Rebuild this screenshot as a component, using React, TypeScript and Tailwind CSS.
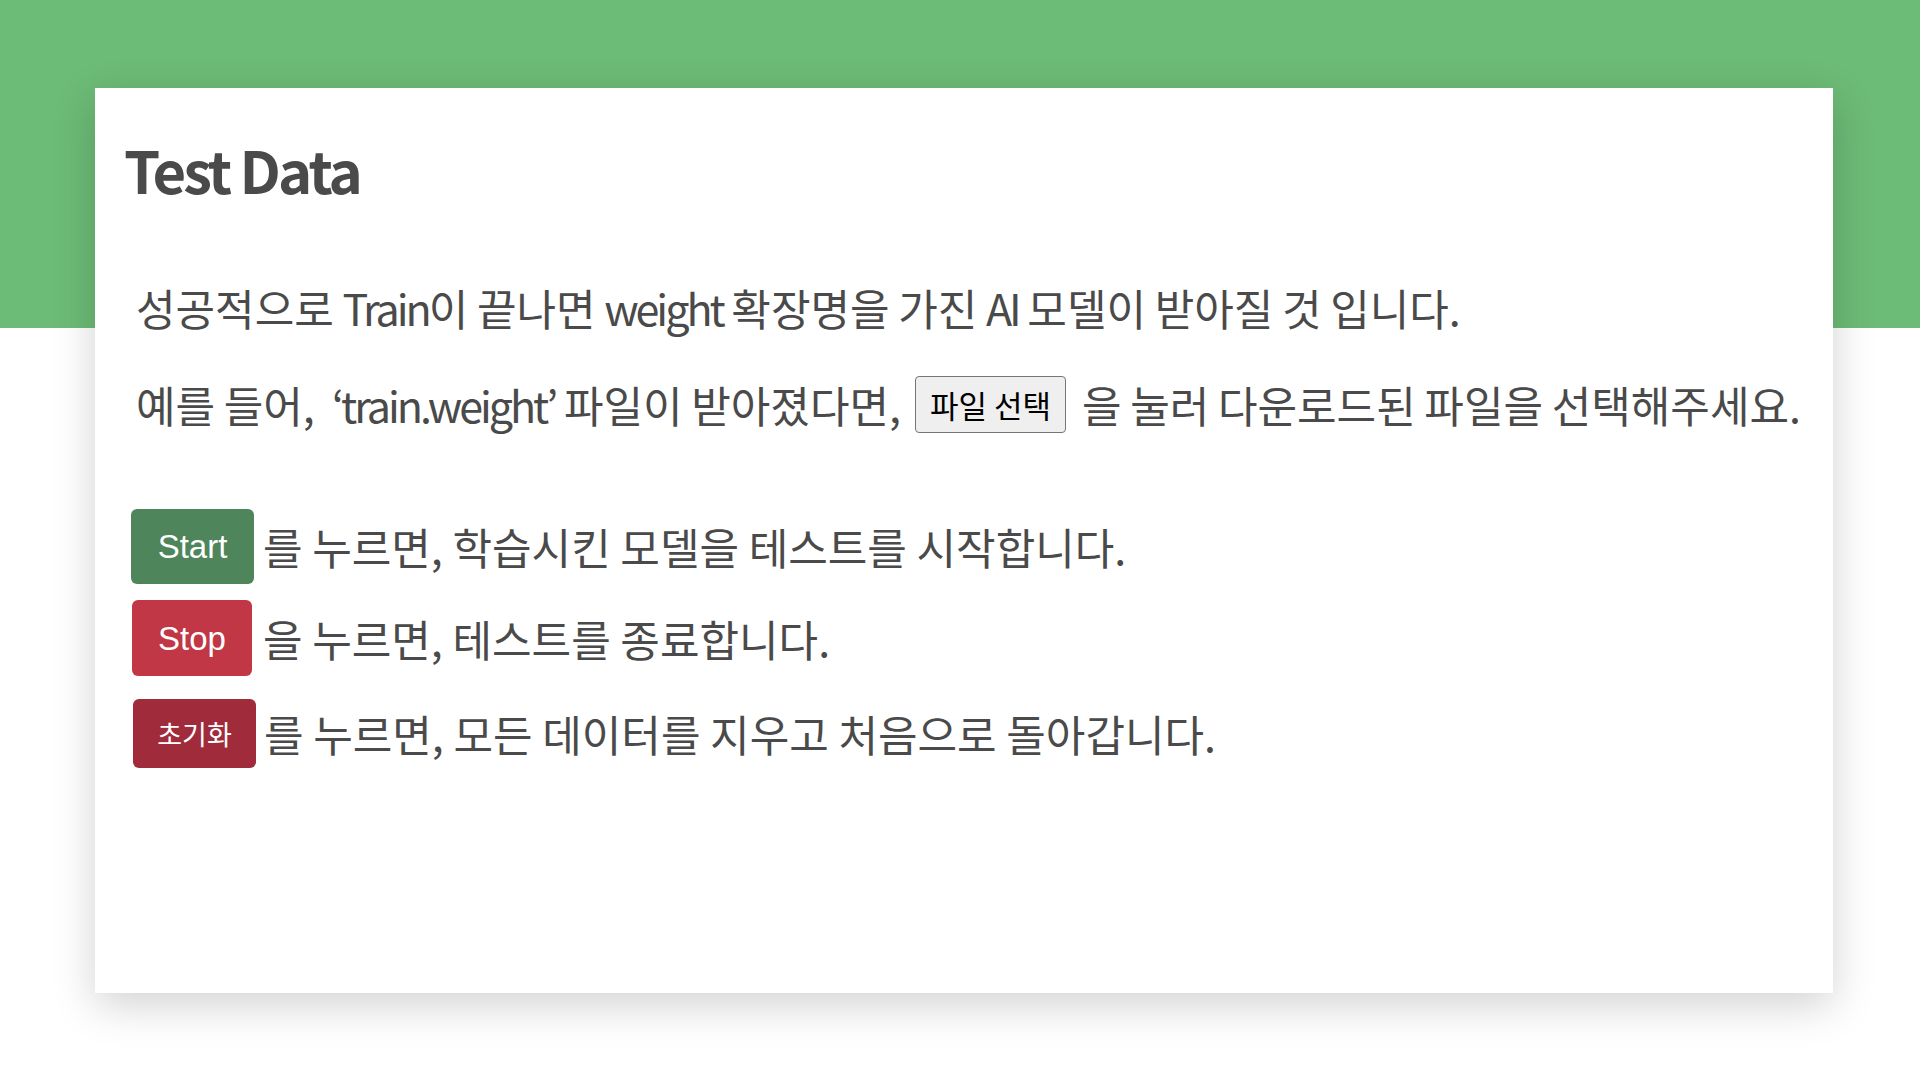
export default function App() {
  const kr = "font-['Noto_Sans_CJK_KR',sans-serif]"
  // Latin words sit a little tighter than the hangul around them
  const latin = 'tracking-[-0.07em]'

  return (
    <div className="min-h-[1080px] w-[1920px] bg-[linear-gradient(to_bottom,#6cbb76_328px,#ffffff_328px)] pt-[88px] pl-[95px]">
      {/* Card */}
      <div className={`${kr} w-[1738px] h-[905px] bg-white shadow-[0_12px_40px_rgba(0,0,0,0.18)] pl-[29px] pt-[39px] text-[#4a4a4a]`}>
        <h1 className="text-[58px] font-bold leading-none tracking-[-0.05em] h-[84px] flex items-center">
          Test Data
        </h1>

        {/* Description */}
        <div className="mt-[68px] pl-[12px] text-[43px] leading-none [word-spacing:-1px]">
          <div className="h-[56px] flex items-center whitespace-pre">
            성공적으로 <span className={latin}>Train</span>이 끝나면 <span className={latin}>weight</span> 확장명을 가진 <span className={latin}>AI</span> 모델이 받아질 것 입니다.
          </div>
          <div className="mt-[40px] h-[58px] flex items-center whitespace-pre">
            <span>
              예를 들어,  <span className={latin}>‘train.weight’</span> 파일이 받아졌다면,
            </span>
            <button className="ml-[14px] mr-[16px] h-[57px] w-[151px] rounded-[4px] border border-[#767676] bg-[#efefef] text-[31px] text-black [word-spacing:0px]">
              파일 선택
            </button>
            <span>을 눌러 다운로드된 파일을 선택해주세요.</span>
          </div>
        </div>

        {/* Actions */}
        <div className="mt-[76px] pl-[7px] flex flex-col text-[43px] leading-none">
          <div className="flex items-center gap-[9px]">
            <button className="h-[75px] w-[123px] rounded-[6px] bg-[#4e855a] text-white text-[33px] font-['Liberation_Sans',sans-serif]">
              Start
            </button>
            <span>를 누르면, 학습시킨 모델을 테스트를 시작합니다.</span>
          </div>
          <div className="mt-[16px] flex items-center gap-[11px]">
            <button className="ml-[1px] h-[76px] w-[120px] rounded-[6px] bg-[#c13745] text-white text-[33px] font-['Liberation_Sans',sans-serif]">
              Stop
            </button>
            <span>을 누르면, 테스트를 종료합니다.</span>
          </div>
          <div className="mt-[23px] flex items-center gap-[8px]">
            <button className="ml-[2px] h-[69px] w-[123px] rounded-[6px] bg-[#a02c3b] text-white text-[27px]">
              초기화
            </button>
            <span>를 누르면, 모든 데이터를 지우고 처음으로 돌아갑니다.</span>
          </div>
        </div>
      </div>
    </div>
  )
}
